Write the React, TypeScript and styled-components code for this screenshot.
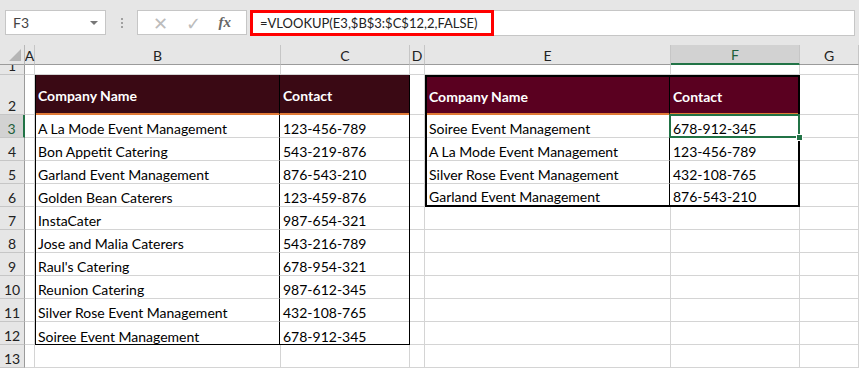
import React from "react";
import styled, { createGlobalStyle } from "styled-components";

const GlobalStyle = createGlobalStyle`
  html, body {
    margin: 0;
    padding: 0;
    background: #ffffff;
    overflow: hidden;
  }
  body {
    font-family: Lato, "Open Sans", sans-serif;
  }
`;

const FONT = `Lato, "Open Sans", sans-serif`;
const GRID = "#d4d4d4";
const GREEN = "#217346";

const Page = styled.div`
  width: 859px;
  height: 369px;
  overflow: hidden;
  background: #fff;
`;

const Toolbar = styled.div`
  height: 45px;
  background: #e6e6e6;
  display: flex;
  align-items: flex-start;
  padding: 10px 4px 0 5px;
  box-sizing: border-box;
`;

const NameBox = styled.div`
  width: 101px;
  height: 25px;
  box-sizing: border-box;
  background: #fff;
  border: 1px solid #c6c6c6;
  display: flex;
  align-items: center;
  justify-content: space-between;
  padding: 0 7px 0 7px;
  font-family: ${FONT};
  font-size: 14px;
  color: #444;
`;

const Caret = styled.span`
  width: 0;
  height: 0;
  border-left: 4px solid transparent;
  border-right: 4px solid transparent;
  border-top: 4px solid #777;
`;

const Grip = styled.div`
  width: 31px;
  height: 25px;
  display: flex;
  flex-direction: column;
  align-items: center;
  justify-content: center;
  gap: 2px;
  span {
    width: 2px;
    height: 2px;
    background: #a0a0a0;
  }
`;

const IconBox = styled.div`
  width: 110px;
  height: 25px;
  box-sizing: border-box;
  background: #fff;
  border: 1px solid #c6c6c6;
  display: flex;
  align-items: center;
  justify-content: space-around;
  padding: 0 6px;
  color: #bcbcbc;
  font-size: 18px;
`;

const Fx = styled.span`
  font-family: "Liberation Serif", serif;
  font-style: italic;
  font-weight: bold;
  font-size: 15px;
  color: #666;
`;

const FormulaBox = styled.div`
  flex: 1;
  height: 26px;
  margin-left: 3px;
  box-sizing: border-box;
  background: #fff;
  border: 1px solid #c6c6c6;
  display: flex;
`;

const FormulaText = styled.div`
  width: 244px;
  height: 26px;
  margin: -1px 0 0 -1px;
  box-sizing: border-box;
  border: 3px solid #ff0000;
  font-family: ${FONT};
  font-size: 13px;
  color: #222;
  display: flex;
  align-items: center;
  padding-left: 7px;
`;

const Sheet = styled.div`
  display: grid;
  grid-template-columns: 25px 10px 246px 129px 15px 246px 129px 59px;
  grid-template-rows: 20px 10px 40px repeat(11, 23px);
  font-family: ${FONT};
  font-size: 14px;
  color: #000;
`;

const Corner = styled.div`
  background: #e6e6e6;
  border-right: 1px solid #b8b8b8;
  border-bottom: 1px solid #9b9b9b;
  position: relative;
  &::after {
    content: "";
    position: absolute;
    right: 3px;
    bottom: 3px;
    width: 0;
    height: 0;
    border-left: 12px solid transparent;
    border-bottom: 12px solid #b5b5b5;
  }
`;

const ColHead = styled.div<{ $sel?: boolean }>`
  background: ${(p) => (p.$sel ? "#d2d2d2" : "#e6e6e6")};
  border-right: 1px solid #c6c6c6;
  border-bottom: ${(p) => (p.$sel ? `2px solid ${GREEN}` : "1px solid #9b9b9b")};
  display: flex;
  align-items: center;
  justify-content: center;
  padding-top: 1px;
  font-size: 14px;
  color: ${(p) => (p.$sel ? "#1e5e3a" : "#222")};
`;

const RowHead = styled.div<{ $sel?: boolean; $row: number }>`
  grid-column: 1;
  grid-row: ${(p) => p.$row};
  background: ${(p) => (p.$sel ? "#d2d2d2" : "#e6e6e6")};
  border-bottom: 1px solid #c6c6c6;
  border-right: ${(p) => (p.$sel ? `2px solid ${GREEN}` : "1px solid #9b9b9b")};
  display: flex;
  align-items: flex-end;
  justify-content: center;
  font-size: 14px;
  color: ${(p) => (p.$sel ? "#1e5e3a" : "#222")};
  overflow: hidden;
  line-height: 17px;
`;

const Cell = styled.div<{ $row: number; $col: number }>`
  grid-row: ${(p) => p.$row};
  grid-column: ${(p) => p.$col};
  border-right: 1px solid ${GRID};
  border-bottom: 1px solid ${GRID};
`;

const Table = styled.div<{ $col: number; $rows: number; $thick: boolean; $head: string }>`
  grid-column: ${(p) => p.$col} / span 2;
  grid-row: 3 / span ${(p) => p.$rows};
  display: grid;
  grid-template-columns: 1fr ${(p) => (p.$thick ? "128px" : "129px")};
  grid-template-rows: ${(p) =>
    p.$thick ? `38px repeat(${p.$rows - 2}, 23px) 1fr` : `40px repeat(${p.$rows - 1}, 23px)`};
  box-sizing: border-box;
  border: ${(p) => (p.$thick ? "2px" : "1px")} solid #000;
  border-top: ${(p) => (p.$thick ? "2px solid #000" : "none")};
  background: #fff;
  --head: ${(p) => p.$head};
`;

const HeadCell = styled.div<{ $first?: boolean }>`
  background: var(--head);
  color: #fff;
  font-weight: bold;
  display: flex;
  align-items: center;
  padding: 2px 0 0 ${(p) => (p.$first ? "2px" : "3px")};
  border-bottom: 2px solid #e07a36;
  border-right: ${(p) => (p.$first ? "1px solid #000" : "none")};
`;

const DataCell = styled.div<{ $first?: boolean; $last?: boolean; $active?: boolean }>`
  position: relative;
  display: flex;
  align-items: flex-end;
  padding-left: ${(p) => (p.$first ? "2px" : "3px")};
  border-right: ${(p) => (p.$first ? "1px solid #000" : "none")};
  border-bottom: ${(p) => (p.$last ? "none" : `1px solid ${GRID}`)};
  white-space: nowrap;
  line-height: 17px;
  ${(p) =>
    p.$active &&
    `
    z-index: 1;
    &::before {
      content: "";
      position: absolute;
      left: -1px;
      top: -1px;
      right: -2px;
      bottom: -1px;
      border: 2px solid ${GREEN};
    }
    &::after {
      content: "";
      position: absolute;
      right: -5px;
      bottom: -4px;
      width: 5px;
      height: 5px;
      background: ${GREEN};
      border: 1px solid #fff;
    }
  `}
`;

const cols = ["A", "B", "C", "D", "E", "F", "G"];

const leftRows = [
  ["A La Mode Event Management", "123-456-789"],
  ["Bon Appetit Catering", "543-219-876"],
  ["Garland Event Management", "876-543-210"],
  ["Golden Bean Caterers", "123-459-876"],
  ["InstaCater", "987-654-321"],
  ["Jose and Malia Caterers", "543-216-789"],
  ["Raul's Catering", "678-954-321"],
  ["Reunion Catering", "987-612-345"],
  ["Silver Rose Event Management", "432-108-765"],
  ["Soiree Event Management", "678-912-345"],
];

const rightRows = [
  ["Soiree Event Management", "678-912-345"],
  ["A La Mode Event Management", "123-456-789"],
  ["Silver Rose Event Management", "432-108-765"],
  ["Garland Event Management", "876-543-210"],
];

const LookupTable = ({
  col,
  rows,
  thick,
  head,
  active,
}: {
  col: number;
  rows: string[][];
  thick: boolean;
  head: string;
  active?: number;
}) => (
  <Table $col={col} $rows={rows.length + 1} $thick={thick} $head={head}>
    <HeadCell $first>Company Name</HeadCell>
    <HeadCell>Contact</HeadCell>
    {rows.map((r, i) => (
      <React.Fragment key={i}>
        <DataCell $first $last={i === rows.length - 1}>
          {r[0]}
        </DataCell>
        <DataCell $last={i === rows.length - 1} $active={active === i}>
          {r[1]}
        </DataCell>
      </React.Fragment>
    ))}
  </Table>
);

const App = () => {
  const rowNums = Array.from({ length: 13 }, (_, i) => i + 1);
  return (
    <Page>
      <GlobalStyle />
      <Toolbar>
        <NameBox>
          F3
          <Caret />
        </NameBox>
        <Grip>
          <span />
          <span />
          <span />
        </Grip>
        <IconBox>
          <span>✕</span>
          <span>✓</span>
          <Fx>fx</Fx>
        </IconBox>
        <FormulaBox>
          <FormulaText>=VLOOKUP(E3,$B$3:$C$12,2,FALSE)</FormulaText>
        </FormulaBox>
      </Toolbar>
      <Sheet>
        <Corner />
        {cols.map((c) => (
          <ColHead key={c} $sel={c === "F"}>
            {c}
          </ColHead>
        ))}
        {rowNums.map((n) => (
          <React.Fragment key={n}>
            <RowHead $row={n + 1} $sel={n === 3}>
              {n}
            </RowHead>
            {cols.map((c, ci) => (
              <Cell key={c} $row={n + 1} $col={ci + 2} />
            ))}
          </React.Fragment>
        ))}
        <LookupTable col={3} rows={leftRows} thick={false} head="#3a0914" />
        <LookupTable col={6} rows={rightRows} thick head="#5a0020" active={0} />
      </Sheet>
    </Page>
  );
};

export default App;
